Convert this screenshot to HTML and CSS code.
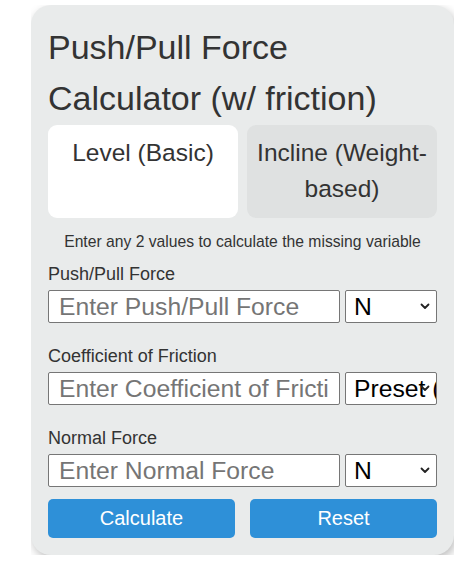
FILE: index.html
```html
<!DOCTYPE html>
<html lang="en">
<head>
<meta charset="utf-8">
<title>Push/Pull Force Calculator (w/ friction)</title>
<link rel="stylesheet" href="styles.css">
</head>
<body>
<div class="frame">
  <div class="card">
    <h1 class="title">Push/Pull Force Calculator (w/ friction)</h1>
    <div class="tabs">
      <div class="tab tab-active">Level (Basic)</div>
      <div class="tab">Incline (Weight-based)</div>
    </div>
    <p class="hint">Enter any 2 values to calculate the missing variable</p>

    <div class="field">
      <label class="label" for="force">Push/Pull Force</label>
      <div class="row">
        <input class="input" id="force" type="text" placeholder="Enter Push/Pull Force">
        <div class="select-wrap">
          <select class="select"><option>N</option><option>kN</option><option>lbf</option></select>
          <svg class="chevron" width="10" height="7" viewBox="0 0 10 7"><path d="M1.5 1.5 L5 5 L8.5 1.5" fill="none" stroke="#222" stroke-width="1.8" stroke-linecap="round" stroke-linejoin="round"/></svg>
        </div>
      </div>
    </div>

    <div class="field">
      <label class="label" for="mu">Coefficient of Friction</label>
      <div class="row">
        <input class="input" id="mu" type="text" placeholder="Enter Coefficient of Friction">
        <div class="select-wrap">
          <select class="select"><option>Preset (choose)</option></select>
          <svg class="chevron" width="10" height="7" viewBox="0 0 10 7"><path d="M1.5 1.5 L5 5 L8.5 1.5" fill="none" stroke="#222" stroke-width="1.8" stroke-linecap="round" stroke-linejoin="round"/></svg>
        </div>
      </div>
    </div>

    <div class="field field-last">
      <label class="label" for="normal">Normal Force</label>
      <div class="row">
        <input class="input" id="normal" type="text" placeholder="Enter Normal Force">
        <div class="select-wrap">
          <select class="select"><option>N</option><option>kN</option><option>lbf</option></select>
          <svg class="chevron" width="10" height="7" viewBox="0 0 10 7"><path d="M1.5 1.5 L5 5 L8.5 1.5" fill="none" stroke="#222" stroke-width="1.8" stroke-linecap="round" stroke-linejoin="round"/></svg>
        </div>
      </div>
    </div>

    <div class="buttons">
      <button class="btn" type="button">Calculate</button>
      <button class="btn" type="button">Reset</button>
    </div>
  </div>
</div>
</body>
</html>
```

FILE: styles.css
```css
html, body {
  margin: 0;
  padding: 0;
  background: #ffffff;
}

body {
  font-family: "Liberation Sans", Arial, sans-serif;
  color: #333333;
}

.frame {
  margin: 5px 0 0 31px;
  width: 423px;
  height: 550px;
  overflow: hidden;
}

.card {
  box-sizing: border-box;
  height: 100%;
  background: #e9ebeb;
  border-radius: 20px;
  box-shadow: 2px 4px 10px rgba(0, 0, 0, 0.25);
  padding: 17px;
}

.title {
  margin: 0 0 1px 0;
  font-size: 34px;
  line-height: 51px;
  font-weight: normal;
  color: #333333;
}

.tabs {
  display: grid;
  grid-template-columns: 1fr 1fr;
  gap: 9px;
}

.tab {
  background: #dfe1e1;
  border-radius: 9px;
  padding: 10px 6px 11px;
  font-size: 24.5px;
  line-height: 36px;
  text-align: center;
  color: #333333;
}

.tab-active {
  background: #ffffff;
}

.hint {
  margin: 12px 0 7px;
  font-size: 15.7px;
  line-height: 24px;
  text-align: center;
  color: #333333;
}

.field {
  margin-bottom: 20px;
}

.field-last {
  margin-bottom: 12px;
}

.label {
  display: block;
  font-size: 18px;
  line-height: 27px;
  margin-bottom: 2px;
  color: #333333;
}

.row {
  display: flex;
  gap: 5px;
}

.input {
  box-sizing: border-box;
  width: 292px;
  height: 33px;
  margin: 0;
  padding: 0 10px;
  border: 1px solid #767676;
  border-radius: 2px;
  background: #ffffff;
  font-family: "Liberation Sans", Arial, sans-serif;
  font-size: 24.7px;
  color: #000000;
}

.input::placeholder {
  color: #757575;
}

.select-wrap {
  position: relative;
  width: 92px;
  height: 33px;
}

.select {
  -webkit-appearance: none;
  appearance: none;
  box-sizing: border-box;
  width: 92px;
  height: 33px;
  margin: 0;
  padding: 0 0 0 8px;
  border: 1px solid #767676;
  border-radius: 2px;
  background-color: #ffffff;
  font-family: "Liberation Sans", Arial, sans-serif;
  font-size: 24.7px;
  color: #000000;
}

.chevron {
  position: absolute;
  right: 7px;
  top: 13px;
  pointer-events: none;
}

.buttons {
  display: flex;
  gap: 15px;
}

.btn {
  flex: 1;
  height: 39px;
  margin: 0;
  border: none;
  border-radius: 5px;
  background: #2e90d8;
  color: #ffffff;
  font-family: "Liberation Sans", Arial, sans-serif;
  font-size: 20px;
}
```
